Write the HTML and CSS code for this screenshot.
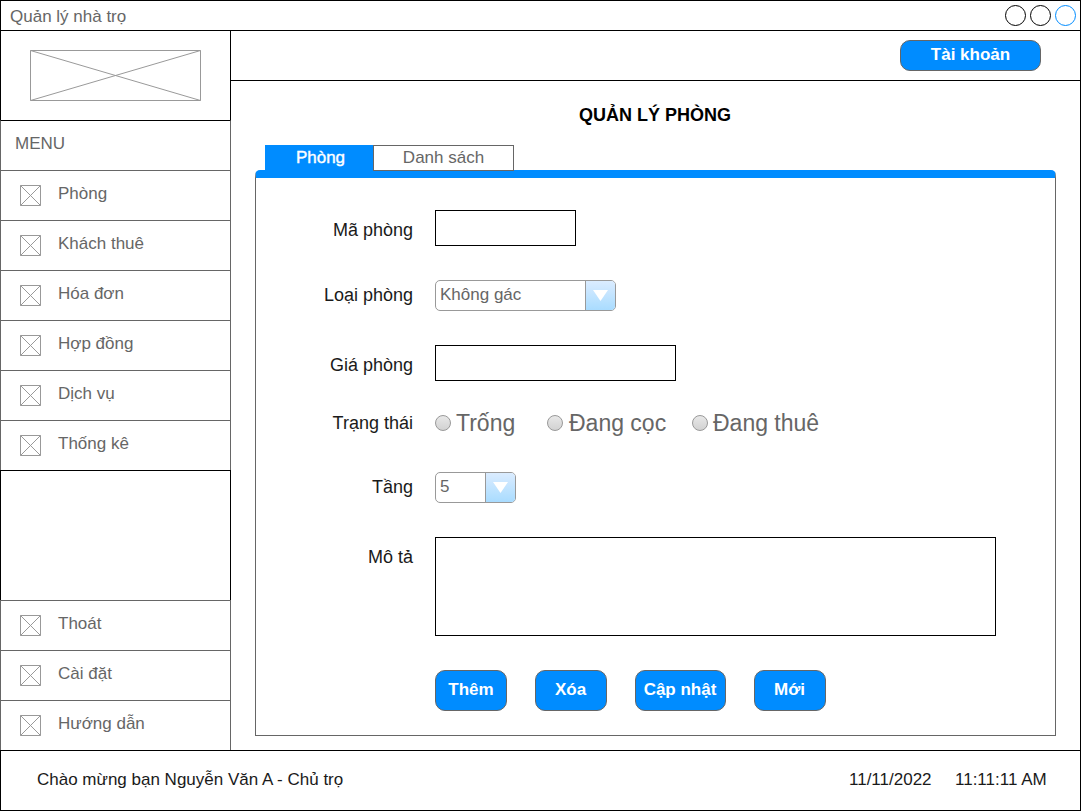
FILE: index.html
```html
<!DOCTYPE html>
<html lang="vi">
<head>
<meta charset="utf-8">
<title>Quản lý nhà trọ</title>
<link rel="stylesheet" href="styles.css">
</head>
<body>
<svg class="defs" width="0" height="0">
  <symbol id="box" viewBox="0 0 21 21"><path d="M.5 .5h20v20h-20zM.5 .5l20 20M20.5 .5l-20 20"/></symbol>
</svg>
<div class="window">
  <header class="titlebar">
    <span class="app-name">Quản lý nhà trọ</span>
    <div class="controls"><i class="dot"></i><i class="dot"></i><i class="dot dot-blue"></i></div>
  </header>
  <div class="body">
    <nav class="sidebar">
      <div class="cell logo"><svg class="line-art" width="171" height="51"><path d="M.5 .5h170v50h-170zM.5 .5l170 50M170.5 .5l-170 50"/></svg></div>
      <div class="cell heading">MENU</div>
      <div class="cell item"><svg class="line-art icon"><use href="#box"/></svg><span>Phòng</span></div>
      <div class="cell item"><svg class="line-art icon"><use href="#box"/></svg><span>Khách thuê</span></div>
      <div class="cell item"><svg class="line-art icon"><use href="#box"/></svg><span>Hóa đơn</span></div>
      <div class="cell item"><svg class="line-art icon"><use href="#box"/></svg><span>Hợp đồng</span></div>
      <div class="cell item"><svg class="line-art icon"><use href="#box"/></svg><span>Dịch vụ</span></div>
      <div class="cell item"><svg class="line-art icon"><use href="#box"/></svg><span>Thống kê</span></div>
      <div class="cell spacer"></div>
      <div class="cell item"><svg class="line-art icon"><use href="#box"/></svg><span>Thoát</span></div>
      <div class="cell item"><svg class="line-art icon"><use href="#box"/></svg><span>Cài đặt</span></div>
      <div class="cell item"><svg class="line-art icon"><use href="#box"/></svg><span>Hướng dẫn</span></div>
    </nav>
    <main class="main">
      <div class="topbar"><button class="btn account">Tài khoản</button></div>
      <h1 class="title">QUẢN LÝ PHÒNG</h1>
      <div class="tabs">
        <div class="tab tab-active">Phòng</div>
        <div class="tab">Danh sách</div>
      </div>
      <section class="panel">
        <div class="row"><label class="label">Mã phòng</label><div class="input code"></div></div>
        <div class="row"><label class="label label-select">Loại phòng</label><div class="select type"><span class="value">Không gác</span><span class="arrow"><svg width="15" height="11"><path d="M0 0h15L7.5 11z"/></svg></span></div></div>
        <div class="row"><label class="label">Giá phòng</label><div class="input price"></div></div>
        <div class="row status">
          <label class="label label-status">Trạng thái</label>
          <div class="radios">
            <div class="radio"><i class="knob"></i><span>Trống</span></div>
            <div class="radio"><i class="knob"></i><span>Đang cọc</span></div>
            <div class="radio"><i class="knob"></i><span>Đang thuê</span></div>
          </div>
        </div>
        <div class="row"><label class="label label-select">Tầng</label><div class="select floor"><span class="value">5</span><span class="arrow"><svg width="15" height="11"><path d="M0 0h15L7.5 11z"/></svg></span></div></div>
        <div class="row"><label class="label">Mô tả</label><div class="input note"></div></div>
        <div class="row actions">
          <button class="btn">Thêm</button>
          <button class="btn">Xóa</button>
          <button class="btn update">Cập nhật</button>
          <button class="btn">Mới</button>
        </div>
      </section>
    </main>
  </div>
  <footer class="statusbar">
    <span class="welcome">Chào mừng bạn Nguyễn Văn A - Chủ trọ</span>
    <span class="date">11/11/2022</span>
    <span class="time">11:11:11 AM</span>
  </footer>
</div>
</body>
</html>
```
FILE: styles.css
```css
* { box-sizing: border-box; }
body {
  margin: 0;
  background: #fff;
  color: #666;
  font: 17px/20px "Liberation Sans", Arial, sans-serif;
}
.defs { display: block; height: 0; }
.window {
  display: flex;
  flex-direction: column;
  width: 1081px;
  height: 811px;
  overflow: hidden;
}
.titlebar {
  display: flex;
  justify-content: space-between;
  height: 30px;
  padding: 6px 4px 0 9px;
  border: 1px solid #000;
  border-bottom: 0;
}
.controls { display: flex; gap: 4px; margin-top: -2px; }
.dot {
  width: 21px;
  height: 21px;
  border: 1px solid #000;
  border-radius: 50%;
}
.dot-blue { border-color: #008cff; }
.body { display: flex; height: 720px; }

.sidebar { width: 231px; }
.cell {
  height: 50px;
  border: 1px solid #666;
  border-bottom: 0;
}
.logo { height: 90px; padding: 19px 29px; border-color: #000; }
.heading { padding: 13px 14px; border-top-color: #000; }
.item { display: flex; padding-left: 19px; gap: 17px; padding-top: 13px; }
.spacer { height: 130px; border-color: #000; }
.spacer, .spacer + .cell { flex: none; }
.line-art { display: block; fill: none; stroke: #999; }
.icon { width: 21px; height: 21px; margin-top: 1px; }

.main {
  width: 850px;
  border-top: 1px solid #000;
  border-right: 1px solid #000;
}
.topbar {
  display: flex;
  justify-content: flex-end;
  height: 50px;
  padding: 9px 39px 0 0;
  border-bottom: 1px solid #000;
}
.btn {
  width: 72px;
  height: 41px;
  padding: 0 1px 1px 0;
  border: 1px solid #666;
  border-radius: 10px;
  background: #008cff;
  color: #fff;
  font: bold 17px/20px "Liberation Sans", Arial, sans-serif;
}
.account { width: 141px; height: 31px; padding-right: 0; }
.title {
  margin: 24px 0 20px;
  padding-right: 1px;
  color: #000;
  font-size: 18px;
  line-height: 20px;
  text-align: center;
}
.tabs {
  position: relative;
  z-index: 1;
  display: flex;
  height: 25px;
  padding-left: 34px;
}
.tab {
  width: 141px;
  height: 26px;
  padding-top: 2px;
  border: 1px solid #666;
  background: #fff;
  text-align: center;
}
.tab-active {
  width: 108px;
  padding-left: 3px;
  border-color: #008cff;
  background: #008cff;
  color: #fff;
  -webkit-text-stroke: 0.4px #fff;
}
.panel {
  display: flex;
  flex-direction: column;
  gap: 34px;
  width: 801px;
  height: 566px;
  margin-left: 24px;
  padding: 32px 0 0;
  border: 1px solid #666;
  border-top: 8px solid #008cff;
  border-radius: 5px 5px 0 0;
}
.row { display: flex; align-items: flex-start; }
.label {
  width: 157px;
  margin: 10px 22px 0 0;
  color: #1a1a1a;
  font-size: 18px;
  line-height: 20px;
  text-align: right;
}
.label-select { margin-top: 5px; }
.label-status { margin-top: -2px; }
.input { height: 36px; border: 1px solid #000; }
.code { width: 141px; }
.price { width: 241px; }
.note { width: 561px; height: 99px; }
.select {
  display: flex;
  height: 31px;
  border: 1px solid #999;
  border-radius: 5px;
  overflow: hidden;
}
.type { width: 181px; }
.floor { width: 81px; }
.value { flex: 1; padding: 4px 4px; }
.arrow {
  display: flex;
  width: 30px;
  padding: 9px 0 0 7px;
  border-left: 1px solid #999;
  background: linear-gradient(#dbecff, #a9dcff);
}
.arrow svg { fill: #fff; }
.status { height: 23px; }
.radios { display: flex; font-size: 23px; line-height: 27px; }
.radio { display: flex; margin-top: -5px; }
.radio:nth-child(1) { width: 112px; }
.radio:nth-child(2) { width: 145px; }
.knob {
  width: 16px;
  height: 16px;
  margin: 5px 5px 0 0;
  border: 1px solid #999;
  border-radius: 50%;
  background: linear-gradient(#e8e8e8, #d2d2d2);
}
.radio:nth-child(2) .knob { margin-right: 6px; }
.radio span { white-space: nowrap; }
.actions { gap: 28px; padding-left: 179px; }
.actions .btn:first-child { padding-right: 0; }
.update { width: 91px; }
.statusbar {
  display: flex;
  height: 61px;
  padding: 19px 0 0 36px;
  border: 1px solid #000;
  color: #1a1a1a;
}
.welcome { width: 812px; }
.date { width: 106px; }
```
